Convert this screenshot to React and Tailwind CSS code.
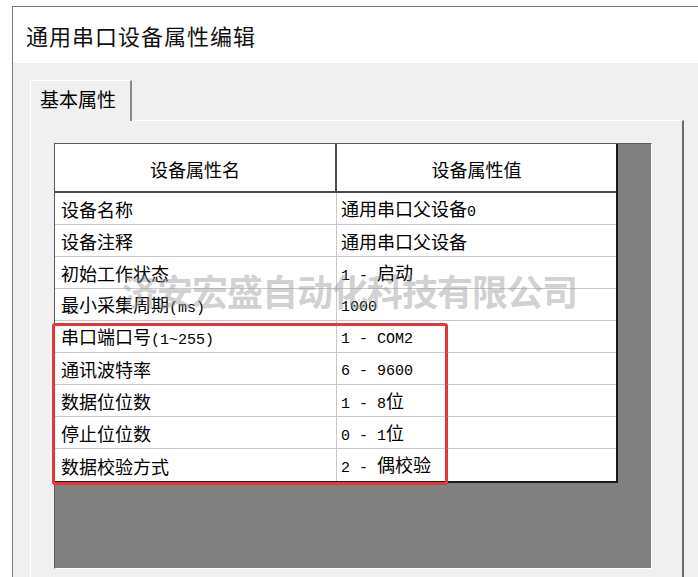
const rows = [
  ['设备名称', '通用串口父设备0'],
  ['设备注释', '通用串口父设备'],
  ['初始工作状态', '1 - 启动'],
  ['最小采集周期(ms)', '1000'],
  ['串口端口号(1~255)', '1 - COM2'],
  ['通讯波特率', '6 - 9600'],
  ['数据位位数', '1 - 8位'],
  ['停止位位数', '0 - 1位'],
  ['数据校验方式', '2 - 偶校验'],
]

// CJK runs get the bigger size, latin/digits the narrow mono face
function Mixed({ text }) {
  const parts = text.split(/([\u4e00-\u9fff]+)/).filter(Boolean)
  return (
    <span className="leading-none whitespace-pre">
      {parts.map((p, i) =>
        /[\u4e00-\u9fff]/.test(p) ? (
          <span key={i} className="text-[18px]">{p}</span>
        ) : (
          <span key={i} className="text-[15px] font-['Liberation_Mono',monospace]">{p}</span>
        )
      )}
    </span>
  )
}

export default function App() {
  return (
    <div className="relative w-[698px] h-[577px] overflow-hidden bg-white pl-[12px] pt-[6px] font-['Noto_Sans_CJK_SC','Noto_Sans',sans-serif] text-black">
      <div className="h-full flex flex-col border-l border-t border-[#7a7a7a]">
        {/* Title */}
        <div className="h-[56px] bg-white flex items-center pl-[13px] text-[22px] tracking-[1px] text-[#111]">
          通用串口设备属性编辑
        </div>

        {/* Body */}
        <div className="flex-1 flex flex-col bg-[#f0f0f0] pl-[17px] pt-[17px]">
          <div className="relative z-10 -mb-px w-[102px] h-[41px] flex items-center pl-[9px] pb-[3px] bg-[#f0f0f0] border-t border-l border-white border-r-2 border-r-[#8a8a8a] text-[19px]">
            基本属性
          </div>

          <div className="flex-1 mr-[14px] border-t border-l border-white border-r-2 border-r-[#6a6a6a] pl-[23px] pt-[22px]">
            <div className="w-[598px] h-[426px] bg-[#808080] border-l border-t border-[#5a5a5a] border-r border-b border-r-white border-b-white">
              <div className="w-[563px] border-r-2 border-b-2 border-[#1a1a1a] bg-white">
                {/* Header */}
                <div className="h-[49px] flex border-b-2 border-[#4a4a4a] text-[18px] pt-[3px]">
                  <div className="w-[282px] border-r-2 border-[#4a4a4a] -mt-[3px] pt-[3px] flex items-center justify-center">设备属性名</div>
                  <div className="flex-1 flex items-center justify-center">设备属性值</div>
                </div>
                {rows.map(([name, value], i) => (
                  <div
                    key={name}
                    className={`h-[32px] flex ${i < rows.length - 1 ? 'border-b border-[#c8c8c8]' : ''}`}
                  >
                    <div className="w-[282px] border-r border-[#c8c8c8] flex items-center pl-[6px] pt-[1px]">
                      <Mixed text={name} />
                    </div>
                    <div className="flex-1 flex items-center pl-[4px] pt-[1px]">
                      <Mixed text={value} />
                    </div>
                  </div>
                ))}
              </div>
            </div>
          </div>
        </div>
      </div>

      {/* watermark */}
      <div className="absolute left-[122px] top-[272px] text-[36px] leading-none font-bold tracking-[-1px] text-[rgba(150,150,150,0.45)] pointer-events-none whitespace-nowrap">
        济安宏盛自动化科技有限公司
      </div>

      {/* red highlight */}
      <div className="absolute left-[52px] top-[323px] w-[396px] h-[162px] border-[3px] border-[#e0393b] rounded-[3px] pointer-events-none" />
    </div>
  )
}
